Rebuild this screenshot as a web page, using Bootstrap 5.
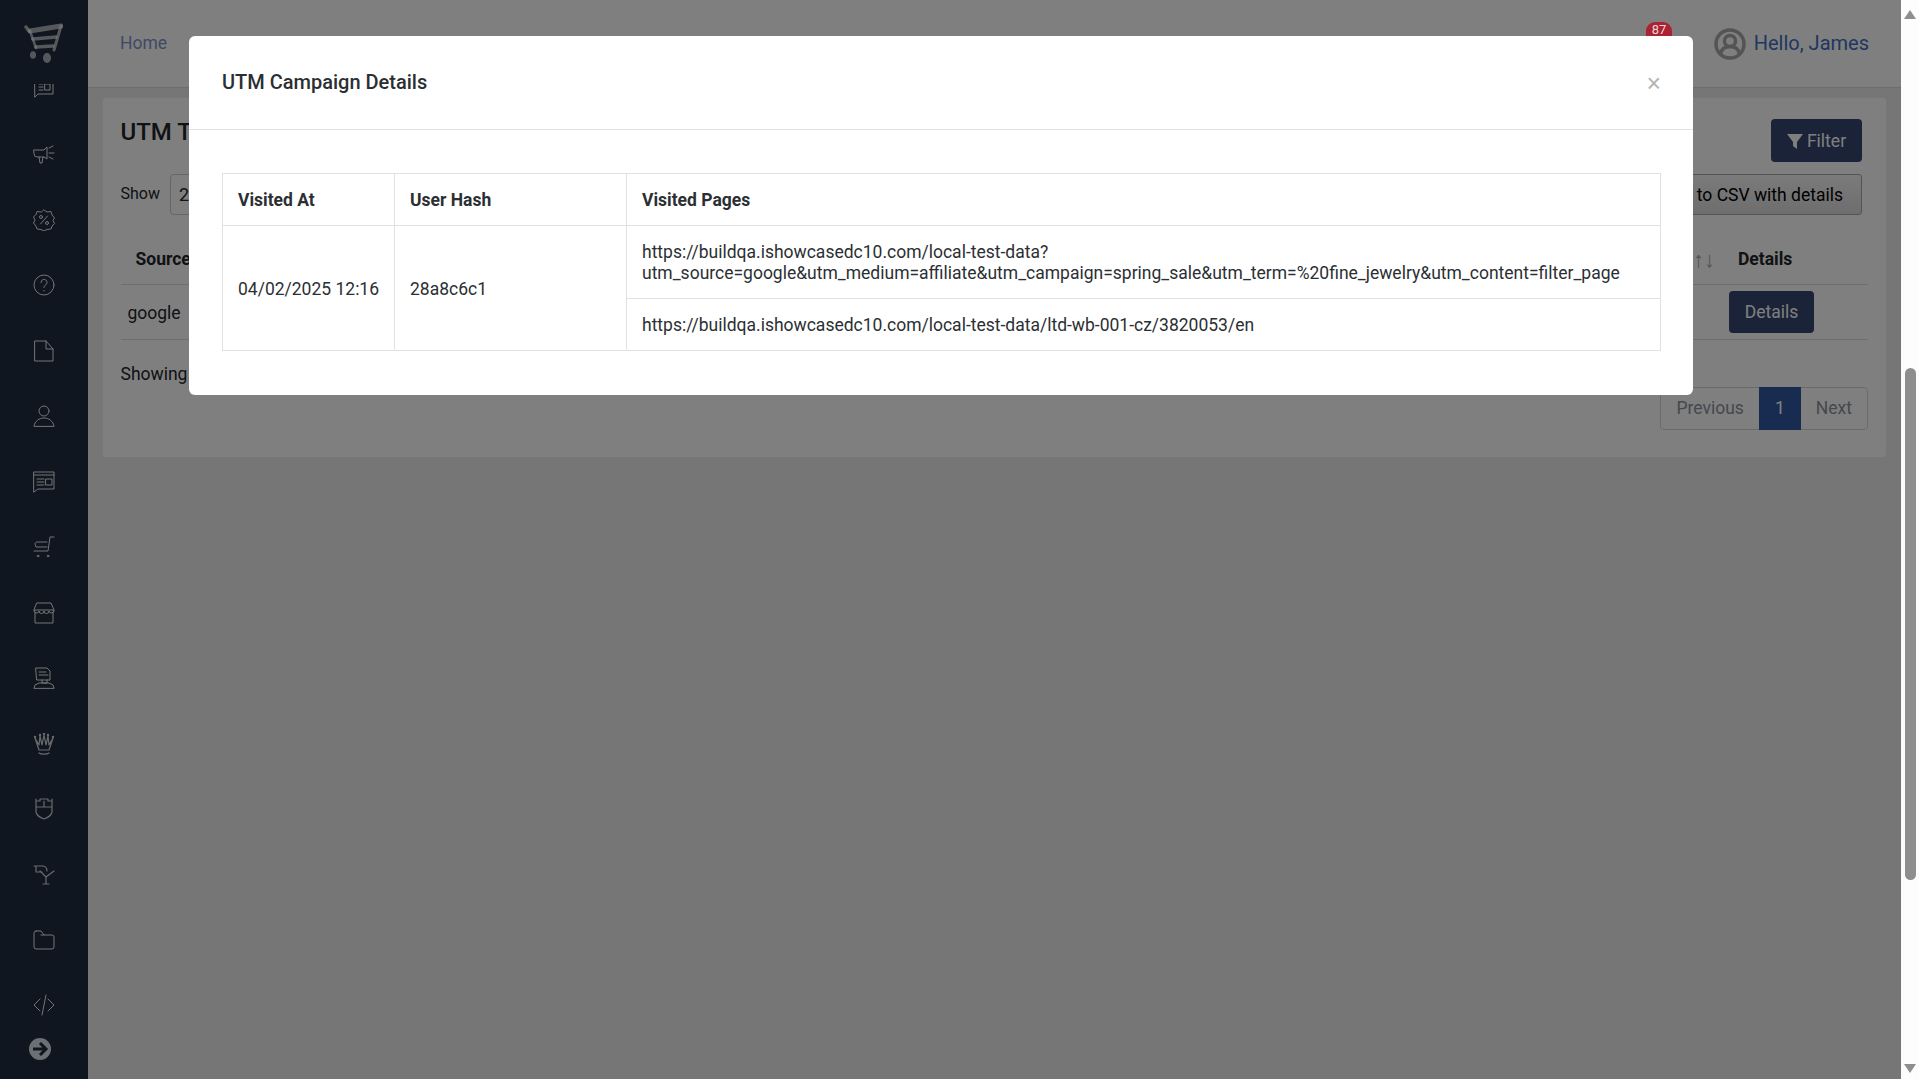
<!DOCTYPE html>
<html lang="en">
<head>
  <meta charset="UTF-8">
  <title>UTM Tracking</title>
  <link href="https://cdn.jsdelivr.net/npm/bootstrap@5.3.3/dist/css/bootstrap.min.css" rel="stylesheet">
  <style>
    html, body { height: 100%; overflow: hidden; }
    body { font-family: Roboto, "Liberation Sans", sans-serif; font-size: 16px; background: #ececec; color: #212529; }
    .page-wrap { width: 1901px; height: 1079px; }
    .side-bar { width: 88px; background: #202c3e; height: 1079px; }
    .side-logo { height: 84px; padding: 23px 0 0 23px; position: relative; z-index: 1; background: #202c3e; }
    .side-list { overflow: hidden; }
    .side-icon { height: 65.45px; }
    .side-icon:first-child { margin-top: -27.5px; }
    .side-icon svg { width: 22px; height: 22px; fill: none; stroke: #fff; stroke-width: 1; stroke-linecap: round; stroke-linejoin: round; opacity: .9; }
    .side-icon svg.icon-bold { stroke-width: 1.2; opacity: .8; }
    .side-foot { height: 43px; padding: 0 0 0 29px; margin-top: -1px; }
    .top-nav { height: 88px; background: #fff; border-bottom: 1px solid #d8d8d8; padding: 0 32px; }
    .top-nav a { font-size: 17.5px; color: #7f93cc; text-decoration: none; margin-top: -1px; }
    .top-nav .hello-link { font-size: 20px; color: #3f6fc0; }
    .bell-box { width: 30px; height: 30px; margin-right: 45px; margin-top: 2px; }
    .bell-badge { position: absolute; top: -8px; left: 7px; z-index: 1052; background: #ab2232; color: #e8d8d8; font-size: 13px; line-height: 16px; padding: 0 6px; border-radius: 9px; min-height: 24px; }
    .main-card { margin: 9px 14px 0 13.5px; background: #fff; border: 1px solid #eee; border-radius: 4px; height: 361px; padding: 21px 18px 0 18px; }
    .card-title-text { font-size: 24px; font-weight: 500; margin: -1px 0 0; line-height: 28px; }
    .btn-navy { background: #34466e; color: #fff; border: 0; border-radius: 4px; font-size: 17.5px; }
    .btn-filter { height: 43px; width: 91px; margin-right: 6px; padding-top: 1px !important; }
    .btn-export { height: 41px; width: 300px; margin-right: 6px; background: linear-gradient(#f6f6f6, #dcdcdc); border: 1px solid #a8a8a8; border-radius: 3px; font-size: 17.5px; color: #000; text-align: right; padding: 1px 18px 0; }
    .show-select { width: 90px; height: 41px; border: 1px solid #ccc; border-radius: 4px; padding: 0 8px; font-size: 18px; line-height: 39px; margin-left: 10px; }
    .show-label { font-size: 16px; margin-top: -2px; }
    .showing-text { font-size: 17.5px; line-height: 24px; margin-top: -1px; }
    .utm-list { border-collapse: collapse; width: 100%; margin-top: 18px; }
    .utm-list th { height: 51px; font-size: 17.5px; font-weight: 700; border-bottom: 1px solid #dcdcdc; padding: 2px 15px 0; }
    .utm-list td { height: 55px; font-size: 17.5px; border-bottom: 1px solid #dcdcdc; padding: 3px 7px 0; }
    .utm-list .details-cell { width: 139px; padding-left: 0; }
    .utm-list th.details-cell { padding-left: 9px; }
    .utm-list .sort-cell { color: #aaa; text-align: right; font-weight: 400; padding-right: 14px; font-size: 22px; }
    .btn-details { width: 85px; height: 42px; padding: 0; margin-top: -2px; }
    .foot-row { margin-top: 23px; }
    .pager-box { margin-top: 24px; height: 43px; border: 1px solid #d5d5d5; border-radius: 4px; font-size: 17.5px; color: #8a919c; }
    .pager-box span { padding: 0 15px; line-height: 41px; }
    .pager-box .pager-on { background: #2f58a0; color: #fff; width: 42px; padding: 0; text-align: center; height: 43px; margin-top: -1px; line-height: 43px; }
    .dark-layer { position: absolute; width: 100%; height: 100%; }
    .modal.dialog-layer { position: absolute; width: 100%; height: 100%; overflow: hidden; }
    .dialog-box { width: 1504px; max-width: none; margin: 36px 0 0 189px; }
    .dialog-box .modal-content { border: 0; border-radius: 6px; }
    .dialog-box .modal-header { height: 94px; padding: 0 32px 0 33px; border-bottom: 1px solid #dee2e6; border-radius: 0; }
    .dialog-box .modal-title { font-size: 20px; font-weight: 500; margin-bottom: 2px; color: #2b2f33; }
    .close-x { font-size: 25px; line-height: 1; color: #b4b4b4; background: none; border: 0; padding: 2px 0 0; font-family: "Liberation Sans", sans-serif; }
    .dialog-box .modal-body { padding: 43px 32px 44px 33px; }
    .visit-table { --bs-table-color: #2b2f33; margin: 0; border-color: #dee2e6; font-size: 17.5px; line-height: 21px; table-layout: fixed; }
    .visit-table th, .visit-table td { padding: 16px 15px 14px; }
    .visit-table th { font-weight: 700; }
    .col-visited { width: 172px; }
    .col-hash { width: 232px; }
    .scroll-rail { width: 18px; height: 1079px; background: #fdfdfd; }
    .arrow-up { width: 0; height: 0; border: 6px solid transparent; border-top: 0; border-bottom: 9px solid #8e8e8e; margin: 10px 0 0 3px; }
    .arrow-down { width: 0; height: 0; border: 6px solid transparent; border-bottom: 0; border-top: 9px solid #8e8e8e; margin: 184px 0 0 3px; }
    .scroll-thumb { width: 11px; height: 512px; margin: 349px 0 0 4px; background: #8e8e8e; border-radius: 6px; }
  </style>
</head>
<body>
<div class="d-flex">
  <div class="page-wrap position-relative d-flex">
    <aside class="side-bar d-flex flex-column flex-shrink-0">
      <div class="side-logo">
        <svg width="40" height="42" viewBox="0 0 40 42" fill="none" stroke="#fff" stroke-opacity=".62" stroke-linecap="round">
          <path d="M3 4L6 8" stroke-width="3.500"/>
          <path d="M7 8L38 3" stroke-width="5"/>
          <path d="M38 3L31 27" stroke-width="3"/>
          <path d="M10 16L33 14" stroke-width="3.500"/>
          <path d="M13 24L30 23" stroke-width="3.500"/>
          <path d="M7 8L13 25" stroke-width="2.500"/>
          <ellipse cx="10" cy="32" rx="3" ry="3.800" fill="#fff" fill-opacity=".62" stroke="none"/>
          <ellipse cx="24" cy="35" rx="4" ry="5" fill="#fff" fill-opacity=".62" stroke="none"/>
        </svg>
      </div>
      <div class="side-list flex-grow-1">
        <div class="side-icon d-flex align-items-center justify-content-center"><svg viewBox="0 0 22 22"><path d="M2 2h18v14H5l-3 3zM6 6h4M6 9h4M6 12h4M12 6h5v6h-5z"/></svg></div>
        <div class="side-icon d-flex align-items-center justify-content-center"><svg viewBox="0 0 22 22"><path d="M1 6h10l3-3v12l-3-2H4a3 3 0 0 1-3-3zM6 13l1 6h2l1-6M16 4l4-2M16 9h5M16 13l4 2"/></svg></div>
        <div class="side-icon d-flex align-items-center justify-content-center"><svg viewBox="0 0 22 22"><path d="M11 1l3 2 4-.5 1 3.500 2.500 3-1.500 2.500 1.500 3-2.500 2.500-1 3-4 .5-3 1.500-3-1.500-4-.5-1-3L.5 14l1.500-3L.5 8l2.500-2.500 1-3 4 .5z"/><path d="M7.500 15l7-8"/><circle cx="8" cy="8" r="1.500"/><circle cx="14" cy="14" r="1.500"/></svg></div>
        <div class="side-icon d-flex align-items-center justify-content-center"><svg viewBox="0 0 22 22"><circle cx="11" cy="11" r="10"/><path d="M8 8.500a3 3 0 1 1 4.500 2.500c-1 .6-1.500 1.200-1.500 2.500M11 16.500v.5"/></svg></div>
        <div class="side-icon d-flex align-items-center justify-content-center"><svg viewBox="0 0 22 22"><path d="M2 1h11l7 8v12H2zM13 1v8h7"/></svg></div>
        <div class="side-icon d-flex align-items-center justify-content-center"><svg viewBox="0 0 22 22"><circle cx="11" cy="6" r="5"/><path d="M1 21c1-5 5-8 10-8s9 3 10 8z"/></svg></div>
        <div class="side-icon d-flex align-items-center justify-content-center"><svg viewBox="0 0 22 22"><path d="M1 1h20v17H5l-4 3zM1 4h20M4 8h7M4 11h7M4 14h7M13 8h6v6h-6z"/></svg></div>
        <div class="side-icon d-flex align-items-center justify-content-center"><svg viewBox="0 0 22 22"><path d="M21 1h-4l-2 14H1M14 6H4c-1 0-2 1-2 2l1 3h11"/><circle cx="5" cy="20" r=".8"/><circle cx="15" cy="20" r=".8"/></svg></div>
        <div class="side-icon d-flex align-items-center justify-content-center"><svg viewBox="0 0 22 22"><path d="M4 1h14l3 7a2.500 2.500 0 0 1-5 1 2.500 2.500 0 0 1-5 0 2.500 2.500 0 0 1-5 0 2.500 2.500 0 0 1-5-1zM1 8h20M2 10v11h18V10"/></svg></div>
        <div class="side-icon d-flex align-items-center justify-content-center"><svg viewBox="0 0 22 22"><path d="M3 1h11l3 3v9H4zM6 5h7M6 8h9M9 13v3h5v-3M1 21l1-3 4-2h10l4 2 1 3z"/></svg></div>
        <div class="side-icon d-flex align-items-center justify-content-center"><svg class="icon-bold" viewBox="0 0 22 22"><path d="M2 5l4 12h10l4-12-4 7-1-9-2 9-2-10-2 10-2-9-1 9zM6 20c2 1.500 8 1.500 10 0"/><circle cx="2" cy="4" r=".6"/><circle cx="20" cy="4" r=".6"/><circle cx="11" cy=".8" r=".6"/><circle cx="7" cy="2" r=".6"/><circle cx="15" cy="2" r=".6"/></svg></div>
        <div class="side-icon d-flex align-items-center justify-content-center"><svg class="icon-bold" viewBox="0 0 22 22"><path d="M3 1v2h4V1h8v2h4V1v13c-1 4-5 6-8 7-3-1-7-3-8-7zM3 9h16M11 3v6"/></svg></div>
        <div class="side-icon d-flex align-items-center justify-content-center"><svg class="icon-bold" viewBox="0 0 22 22"><path d="M1 3h8c3 0 5 2 5 5M3 3v6h6M7 8l6 6 8-6M13 14v7M10 21h6"/></svg></div>
        <div class="side-icon d-flex align-items-center justify-content-center"><svg viewBox="0 0 22 22"><path d="M3 2h5l3 4h8a2 2 0 0 1 2 2v10a2 2 0 0 1-2 2H3a2 2 0 0 1-2-2V4a2 2 0 0 1 2-2zM8 6l3 0"/></svg></div>
        <div class="side-icon d-flex align-items-center justify-content-center"><svg viewBox="0 0 22 22"><path d="M7 5l-6 6 6 6M15 5l6 6-6 6M13 1L9 21"/></svg></div>
      </div>
      <div class="side-foot">
        <svg width="22" height="22" viewBox="0 0 22 22"><circle cx="11" cy="11" r="11" fill="#d8e0ea"/><path d="M4 11h13M11 5l6 6-6 6" fill="none" stroke="#202c3e" stroke-width="3"/></svg>
      </div>
    </aside>
    <main class="flex-grow-1">
      <nav class="top-nav d-flex align-items-center justify-content-between">
        <a href="#">Home</a>
        <div class="d-flex align-items-center">
          <div class="bell-box position-relative">
            <svg width="26" height="26" viewBox="0 0 26 26" fill="#c8c8c8"><path d="M13 2a8 8 0 0 0-8 8v7l-3 3h22l-3-3v-7a8 8 0 0 0-8-8z"/></svg>
            <span class="bell-badge">87</span>
          </div>
          <svg class="me-2" width="32" height="32" viewBox="0 0 32 32" fill="none" stroke="#a8a8a8" stroke-width="3.500"><circle cx="16" cy="16" r="14"/><circle cx="16" cy="13" r="5.500"/><path d="M6.500 26c1-5 4-7.500 9.500-7.500s8.500 2.500 9.500 7.500"/></svg>
          <a class="hello-link" href="#">Hello, James</a>
        </div>
      </nav>
      <section class="main-card">
        <div class="d-flex justify-content-between align-items-start">
          <h1 class="card-title-text">UTM Tracking</h1>
          <button class="btn btn-navy btn-filter d-flex align-items-center justify-content-center gap-1 p-0">
            <svg width="16" height="16" viewBox="0 0 16 16" fill="#fff"><path d="M0 1h16L10 9v7l-4-3V9z"/></svg>Filter
          </button>
        </div>
        <div class="d-flex justify-content-between align-items-center mt-2 pt-1">
          <div class="d-flex align-items-center"><span class="show-label">Show</span><div class="show-select">25</div></div>
          <button class="btn-export">Export to CSV with details</button>
        </div>
        <table class="utm-list">
          <thead><tr><th>Source</th><th class="sort-cell">↑↓</th><th class="details-cell">Details</th></tr></thead>
          <tbody><tr><td>google</td><td></td><td class="details-cell"><button class="btn btn-navy btn-details">Details</button></td></tr></tbody>
        </table>
        <div class="d-flex justify-content-between align-items-start foot-row">
          <span class="showing-text">Showing 1 to 1 of 1 entries</span>
          <div class="pager-box d-flex"><span>Previous</span><span class="pager-on">1</span><span>Next</span></div>
        </div>
      </section>
    </main>
    <div class="modal-backdrop dark-layer show"></div>
    <div class="modal dialog-layer d-block">
      <div class="modal-dialog dialog-box">
        <div class="modal-content">
          <div class="modal-header d-flex justify-content-between align-items-center">
            <h5 class="modal-title">UTM Campaign Details</h5>
            <button class="close-x" type="button">×</button>
          </div>
          <div class="modal-body">
            <table class="table table-bordered visit-table">
              <colgroup><col class="col-visited"><col class="col-hash"><col></colgroup>
              <thead><tr><th>Visited At</th><th>User Hash</th><th>Visited Pages</th></tr></thead>
              <tbody>
                <tr>
                  <td rowspan="2" class="align-middle text-nowrap">04/02/2025 12:16</td>
                  <td rowspan="2" class="align-middle">28a8c6c1</td>
                  <td>https://buildqa.ishowcasedc10.com/local-test-data?<br>utm_source=google&amp;utm_medium=affiliate&amp;utm_campaign=spring_sale&amp;utm_term=%20fine_jewelry&amp;utm_content=filter_page</td>
                </tr>
                <tr><td>https://buildqa.ishowcasedc10.com/local-test-data/ltd-wb-001-cz/3820053/en</td></tr>
              </tbody>
            </table>
          </div>
        </div>
      </div>
    </div>
  </div>
  <div class="scroll-rail flex-shrink-0">
    <div class="arrow-up"></div>
    <div class="scroll-thumb"></div>
    <div class="arrow-down"></div>
  </div>
</div>
<script src="https://cdn.jsdelivr.net/npm/bootstrap@5.3.3/dist/js/bootstrap.bundle.min.js"></script>
</body>
</html>
